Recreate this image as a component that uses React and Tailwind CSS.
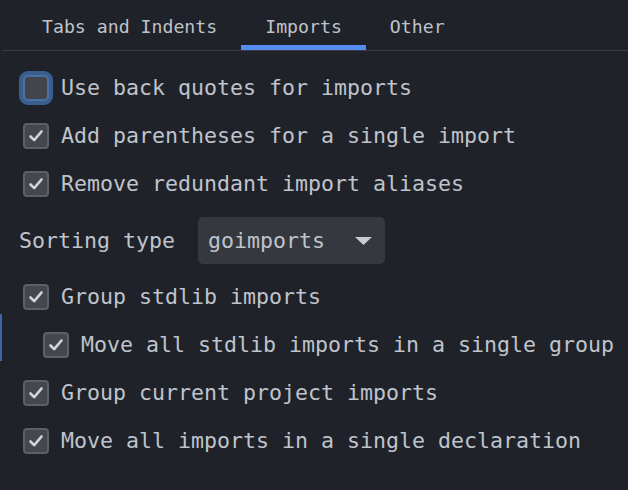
import React from 'react';

const mono = { fontFamily: '"DejaVu Sans Mono", "Liberation Mono", monospace' };

const tabs = ['Tabs and Indents', 'Imports', 'Other'];

const CheckBox = ({ checked, focused }) => {
  if (focused) {
    return (
      <span className="w-[26px] h-[26px] shrink-0 rounded-[5px] border-2 border-[#4a70a6] bg-[#43454b] shadow-[0_0_0_4px_#3c5e8e]" />
    );
  }
  return (
    <span className="w-[26px] h-[26px] shrink-0 rounded-[4px] border-2 border-[#5d6066] bg-[#45474c] flex items-center justify-center">
      {checked && (
        <svg width="18" height="18" viewBox="0 0 18 18" fill="none">
          <path d="M3.5 9.5 L7.2 13.2 L14.5 4.5" stroke="#d2d4d8" strokeWidth="2.6" strokeLinecap="round" strokeLinejoin="round" />
        </svg>
      )}
    </span>
  );
};

const Row = ({ label, checked = true, focused = false, indent = false, marker = false }) => (
  <div className={`relative h-[48px] flex items-center gap-[12px] ${indent ? 'pl-[43px]' : 'pl-[23px]'}`}>
    {marker && <span className="absolute left-0 top-[-7px] h-[47px] w-[2px] bg-[#3f65ad]" />}
    <CheckBox checked={checked} focused={focused} />
    <span className="whitespace-nowrap">{label}</span>
  </div>
);

export default function App() {
  return (
    <div className="w-[628px] h-[490px] bg-[#1f2229] text-[#bfc3cb] overflow-hidden" style={mono}>
      {/* Tab strip */}
      <div className="flex pl-[16px] ml-[2px] border-b border-[#393c43]">
        {tabs.map((t) => (
          <div
            key={t}
            className={`h-[50px] px-[24px] pt-[16px] text-[18.2px] leading-[22px] whitespace-nowrap border-b-[5px] ${
              t === 'Imports' ? 'border-[#568bf0]' : 'border-transparent'
            }`}
          >
            {t}
          </div>
        ))}
      </div>

      <div className="pt-[13px] text-[21.6px] leading-[48px]">
        <Row label="Use back quotes for imports" checked={false} focused />
        <Row label="Add parentheses for a single import" />
        <Row label="Remove redundant import aliases" />

        <div className="h-[65px] flex items-center pl-[19px] gap-[23px]">
          <span className="whitespace-nowrap">Sorting type</span>
          <div className="w-[187px] h-[47px] rounded-[5px] bg-[#35383f] flex items-center justify-between pl-[10px] pr-[13px] leading-none">
            <span>goimports</span>
            <svg width="17" height="8" viewBox="0 0 17 8">
              <path d="M0 0 H17 L8.5 8 Z" fill="#c9ccd1" />
            </svg>
          </div>
        </div>

        <Row label="Group stdlib imports" />
        <Row label="Move all stdlib imports in a single group" indent marker />
        <Row label="Group current project imports" />
        <Row label="Move all imports in a single declaration" />
      </div>
    </div>
  );
}
